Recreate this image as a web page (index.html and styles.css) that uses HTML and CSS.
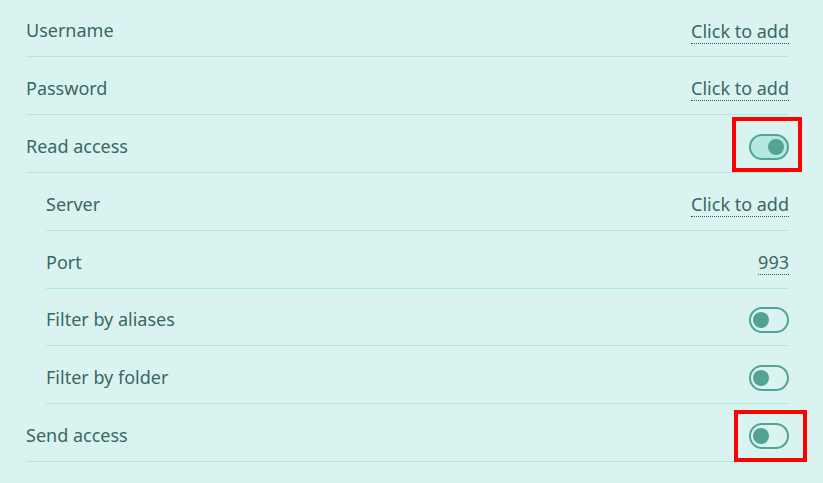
FILE: index.html
```html
<!DOCTYPE html>
<html>
<head>
<meta charset="utf-8">
<link rel="stylesheet" href="styles.css">
</head>
<body>
<div class="settings">
  <div class="row">
    <span class="label">Username</span>
    <span class="value">Click to add</span>
  </div>
  <div class="row">
    <span class="label">Password</span>
    <span class="value">Click to add</span>
  </div>
  <div class="row">
    <span class="label">Read access</span>
    <span class="toggle on"><span class="knob"></span></span>
  </div>
  <div class="row sub">
    <span class="label">Server</span>
    <span class="value">Click to add</span>
  </div>
  <div class="row sub">
    <span class="label">Port</span>
    <span class="value">993</span>
  </div>
  <div class="row sub">
    <span class="label">Filter by aliases</span>
    <span class="toggle"><span class="knob"></span></span>
  </div>
  <div class="row sub">
    <span class="label">Filter by folder</span>
    <span class="toggle"><span class="knob"></span></span>
  </div>
  <div class="row">
    <span class="label">Send access</span>
    <span class="toggle"><span class="knob"></span></span>
  </div>
</div>
<div class="mark mark-read"></div>
<div class="mark mark-send"></div>
</body>
</html>
```
FILE: styles.css
```css
html, body {
  margin: 0;
  padding: 0;
  background: #d9f4f0;
}
body {
  position: relative;
  width: 823px;
  height: 483px;
  overflow: hidden;
  font-family: "Noto Sans", "Open Sans", sans-serif;
  font-size: 18px;
  color: #3a6763;
}
.settings {
  display: flex;
  flex-direction: column;
  padding: 0 34px 0 26px;
  margin-top: -0.9px;
}
.row {
  display: flex;
  justify-content: space-between;
  align-items: center;
  min-height: 26px;
  padding: 17.9px 0 13px;
  border-bottom: 1px solid #b1e8dd;
}
.row.sub {
  margin-left: 20px;
}
.label {
  line-height: 24px;
}
.value {
  line-height: 23px;
  border-bottom: 1px dotted #2f5f5a;
  margin: 1.5px 0 -1.5px;
}
.toggle {
  box-sizing: border-box;
  width: 40px;
  height: 26px;
  border: 2px solid #52a394;
  border-radius: 13px;
  display: flex;
  align-items: center;
  padding: 0 2px;
  margin: 1px 0 -1px;
}
.toggle.on {
  background: #b4e9df;
  justify-content: flex-end;
  padding: 0 3px;
}
.knob {
  width: 16px;
  height: 16px;
  border-radius: 50%;
  background: #52a394;
}
.mark {
  position: absolute;
  box-sizing: border-box;
  border: 4px solid #ff0000;
}
.mark-read {
  left: 732px;
  top: 117px;
  width: 70px;
  height: 55px;
}
.mark-send {
  left: 734px;
  top: 410px;
  width: 73px;
  height: 52px;
}
```
